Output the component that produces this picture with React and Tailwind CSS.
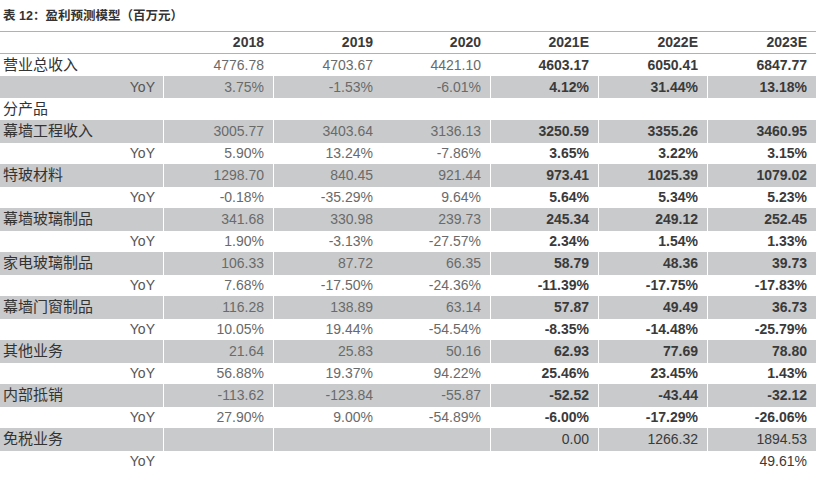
import React from "react";

const rows = [
  { label: "营业总收入", vals: ["4776.78", "4703.67", "4421.10", "4603.17", "6050.41", "6847.77"], gray: false },
  { yoy: true, vals: ["3.75%", "-1.53%", "-6.01%", "4.12%", "31.44%", "13.18%"], gray: true },
  { label: "分产品", vals: null, gray: false },
  { label: "幕墙工程收入", vals: ["3005.77", "3403.64", "3136.13", "3250.59", "3355.26", "3460.95"], gray: true },
  { yoy: true, vals: ["5.90%", "13.24%", "-7.86%", "3.65%", "3.22%", "3.15%"], gray: false },
  { label: "特玻材料", vals: ["1298.70", "840.45", "921.44", "973.41", "1025.39", "1079.02"], gray: true },
  { yoy: true, vals: ["-0.18%", "-35.29%", "9.64%", "5.64%", "5.34%", "5.23%"], gray: false },
  { label: "幕墙玻璃制品", vals: ["341.68", "330.98", "239.73", "245.34", "249.12", "252.45"], gray: true },
  { yoy: true, vals: ["1.90%", "-3.13%", "-27.57%", "2.34%", "1.54%", "1.33%"], gray: false },
  { label: "家电玻璃制品", vals: ["106.33", "87.72", "66.35", "58.79", "48.36", "39.73"], gray: true },
  { yoy: true, vals: ["7.68%", "-17.50%", "-24.36%", "-11.39%", "-17.75%", "-17.83%"], gray: false },
  { label: "幕墙门窗制品", vals: ["116.28", "138.89", "63.14", "57.87", "49.49", "36.73"], gray: true },
  { yoy: true, vals: ["10.05%", "19.44%", "-54.54%", "-8.35%", "-14.48%", "-25.79%"], gray: false },
  { label: "其他业务", vals: ["21.64", "25.83", "50.16", "62.93", "77.69", "78.80"], gray: true },
  { yoy: true, vals: ["56.88%", "19.37%", "94.22%", "25.46%", "23.45%", "1.43%"], gray: false },
  { label: "内部抵销", vals: ["-113.62", "-123.84", "-55.87", "-52.52", "-43.44", "-32.12"], gray: true },
  { yoy: true, vals: ["27.90%", "9.00%", "-54.89%", "-6.00%", "-17.29%", "-26.06%"], gray: false },
  { label: "免税业务", vals: ["", "", "", "0.00", "1266.32", "1894.53"], gray: true, plain: true },
  { yoy: true, vals: ["", "", "", "", "", "49.61%"], gray: false, plain: true },
];

const years = ["2018", "2019", "2020", "2021E", "2022E", "2023E"];
const gridCls = "grid grid-cols-[163px_110px_109px_108px_108px_109px_109px]";
const sepCls = ["border-l border-white", "border-l border-white", "", "border-l border-white", "border-l border-white", "border-l border-white"];

export default function App() {
  return (
    <div className="w-[831px] h-[479px] bg-white overflow-hidden" style={{ fontFamily: '"Liberation Sans", "Noto Sans CJK SC", sans-serif' }}>
      <div className="h-[31px] pl-[3px] pt-[8px] text-[12.5px] font-bold text-[#333] leading-[16px]">
        表 12：盈利预测模型（百万元）
      </div>
      <div className="w-[816px]">
        <div className={`${gridCls} h-[23px] border-t-[1.5px] border-b-[1.5px] border-[#f3a15a] items-center`}>
          <div />
          {years.map((y) => (
            <div key={y} className="text-right pr-[9px] text-[14px] font-bold text-[#3a3a3a]">{y}</div>
          ))}
        </div>
        {rows.map((r, i) => (
          <div key={i} className={`${gridCls} h-[22px] items-stretch`}>
            <div className={`flex items-center text-[15px] text-[#333] ${r.gray ? "bg-[#c9cacc]" : ""} ${r.yoy ? "justify-end pr-[8px]" : "pl-[3px]"}`}>
              {r.yoy ? <span className="text-[14px] text-[#555]">YoY</span> : r.label}
            </div>
            {[0, 1, 2, 3, 4, 5].map((j) => {
              const v = r.vals ? r.vals[j] : "";
              const bold = j >= 3 && !r.plain;
              const color = j >= 3 ? "text-[#3a3a3a]" : "text-[#6a6a6a]";
              return (
                <div
                  key={j}
                  className={`flex items-center justify-end pr-[9px] text-[14px] ${color} ${bold ? "font-bold" : ""} ${r.gray ? `bg-[#c9cacc] ${sepCls[j]}` : ""}`}
                >
                  {v}
                </div>
              );
            })}
          </div>
        ))}
      </div>
    </div>
  );
}
